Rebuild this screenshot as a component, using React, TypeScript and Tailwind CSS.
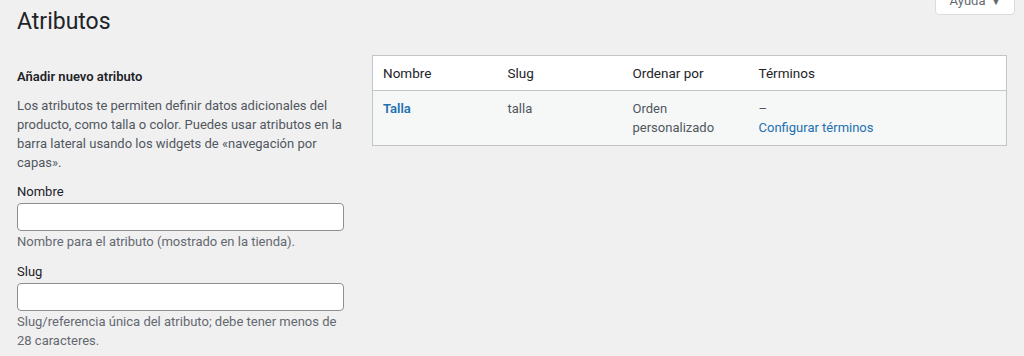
const font = { fontFamily: "Roboto, 'Noto Sans', sans-serif" };

function Field({ label, help }: { label: string; help: string }) {
  return (
    <div className="flex flex-col">
      <label className="text-[13px] leading-[19px] text-[#1d2327]">{label}</label>
      <input
        type="text"
        className="mt-[2px] h-[28px] w-[327px] rounded-[4px] border border-[#8c8f94] bg-white px-2 text-[14px] outline-none"
      />
      <p className="mt-[1px] text-[13px] leading-[19px] text-[#646970]">{help}</p>
    </div>
  );
}

export default function App() {
  return (
    <div className="min-h-[356px] bg-[#f0f0f1] px-[17px] text-[13px]" style={font}>
      <div className="-mr-[8px] flex justify-end">
        <button className="-mt-[13px] flex h-[28px] w-[80px] items-end justify-center gap-[6px] rounded-b-[4px] border border-[#dcdcde] bg-white pb-[4px] text-[13px] text-[#646970]">
          <span>Ayuda</span>
          <span className="pb-[1px] text-[9px]">▼</span>
        </button>
      </div>
      <h1 className="-mt-[8px] text-[23px] leading-[30px] font-normal text-[#1d2327]">Atributos</h1>

      <div className="mt-[18px] flex gap-[28px]">
        <div className="w-[327px] shrink-0 pt-[12px]">
          <h2 className="text-[13px] leading-[19px] font-semibold text-[#1d2327]">Añadir nuevo atributo</h2>
          <p className="mt-[10px] text-[13px] leading-[19px] text-[#50575e]">
            Los atributos te permiten definir datos adicionales del producto, como talla o color. Puedes usar
            atributos en la barra lateral usando los widgets de «navegación por capas».
          </p>
          <div className="mt-[10px] flex flex-col gap-[11px]">
            <Field label="Nombre" help="Nombre para el atributo (mostrado en la tienda)." />
            <Field
              label="Slug"
              help="Slug/referencia única del atributo; debe tener menos de 28 caracteres."
            />
          </div>
        </div>

        <div className="flex-1">
          <table className="w-full border-collapse border border-[#c3c4c7] bg-white text-left">
            <thead>
              <tr className="h-[35px] border-b border-[#c3c4c7]">
                <th className="w-[125px] px-[10px] text-[13.5px] font-normal text-[#1d2327]">Nombre</th>
                <th className="w-[125px] px-[10px] text-[13.5px] font-normal text-[#1d2327]">Slug</th>
                <th className="w-[126px] px-[10px] text-[13.5px] font-normal text-[#1d2327]">Ordenar por</th>
                <th className="px-[10px] text-[13.5px] font-normal text-[#1d2327]">Términos</th>
              </tr>
            </thead>
            <tbody>
              <tr className="bg-[#f6f7f7] align-top">
                <td className="px-[10px] pt-[8px] pb-[8px]">
                  <a href="#" className="text-[13px] leading-[19px] font-semibold text-[#2271b1]">Talla</a>
                </td>
                <td className="px-[10px] pt-[8px] pb-[8px] text-[13px] leading-[19px] text-[#50575e]">talla</td>
                <td className="px-[10px] pt-[8px] pb-[8px] text-[13px] leading-[19px] text-[#50575e]">
                  Orden
                  <br />
                  personalizado
                </td>
                <td className="px-[10px] pt-[8px] pb-[8px] text-[13px] leading-[19px] text-[#50575e]">
                  <div>–</div>
                  <a href="#" className="text-[#2271b1]">Configurar términos</a>
                </td>
              </tr>
            </tbody>
          </table>
        </div>
      </div>
    </div>
  );
}
